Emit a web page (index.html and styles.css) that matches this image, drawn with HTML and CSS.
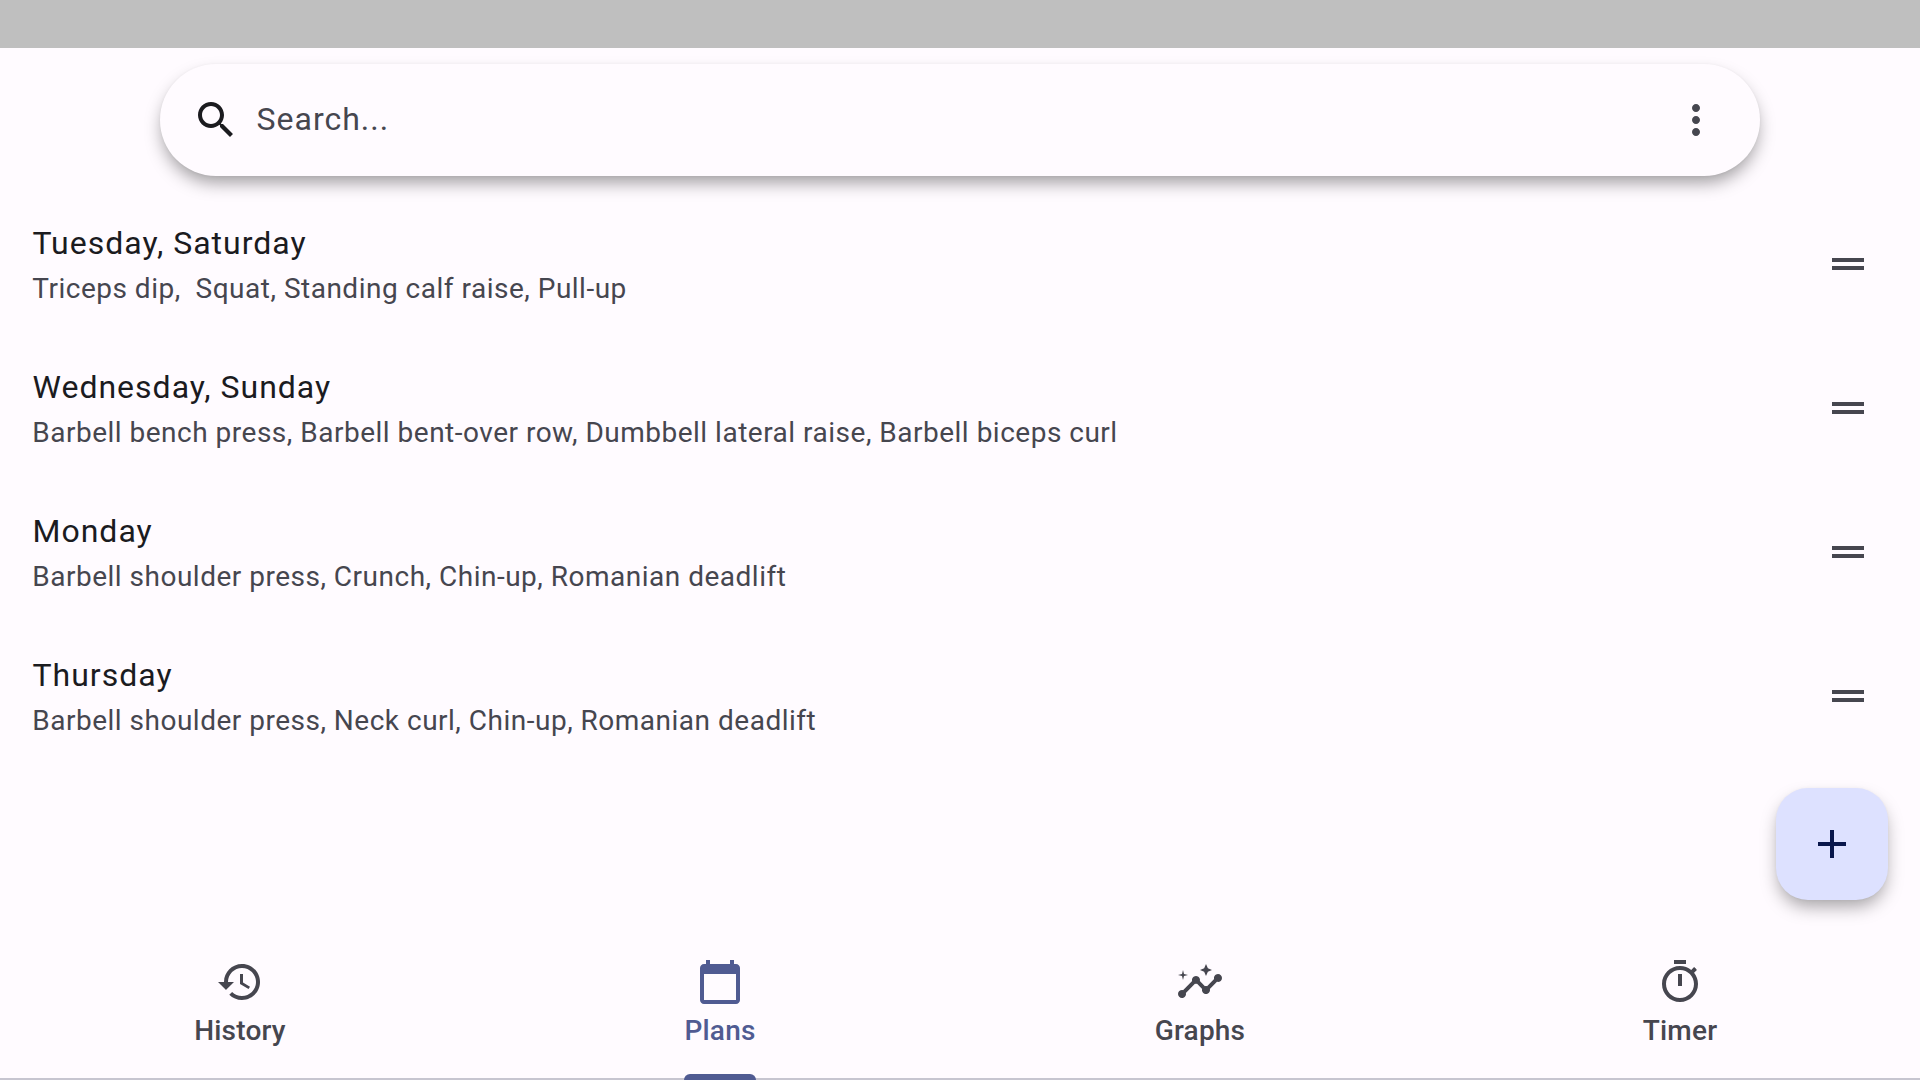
FILE: index.html
```html
<!DOCTYPE html>
<html lang="en">
<head>
<meta charset="utf-8">
<title>Plans</title>
<link rel="stylesheet" href="styles.css">
</head>
<body>
<div class="status-bar"></div>
<header class="search">
  <svg class="icon search-icon" viewBox="0 0 24 24"><path d="M15.5 14h-.79l-.28-.27C15.41 12.59 16 11.11 16 9.5 16 5.91 13.09 3 9.5 3S3 5.91 3 9.5 5.91 16 9.5 16c1.61 0 3.09-.59 4.23-1.57l.27.28v.79l5 4.99L20.49 19l-4.99-5zm-6 0C7.01 14 5 11.99 5 9.5S7.01 5 9.5 5 14 7.01 14 9.5 11.99 14 9.5 14z"/></svg>
  <span class="search-hint">Search...</span>
  <svg class="icon" viewBox="0 0 24 24"><path d="M12 8c1.1 0 2-.9 2-2s-.9-2-2-2-2 .9-2 2 .9 2 2 2zm0 2c-1.1 0-2 .9-2 2s.9 2 2 2 2-.9 2-2-.9-2-2-2zm0 6c-1.1 0-2 .9-2 2s.9 2 2 2 2-.9 2-2-.9-2-2-2z"/></svg>
</header>
<main class="plans">
  <div class="plan">
    <div class="plan-text"><div class="plan-title">Tuesday, Saturday</div><div class="plan-exercises">Triceps dip,  Squat, Standing calf raise, Pull-up</div></div>
    <svg class="icon" viewBox="0 0 24 24"><path d="M20 9H4v2h16V9zM4 15h16v-2H4v2z"/></svg>
  </div>
  <div class="plan">
    <div class="plan-text"><div class="plan-title">Wednesday, Sunday</div><div class="plan-exercises">Barbell bench press, Barbell bent-over row, Dumbbell lateral raise, Barbell biceps curl</div></div>
    <svg class="icon" viewBox="0 0 24 24"><path d="M20 9H4v2h16V9zM4 15h16v-2H4v2z"/></svg>
  </div>
  <div class="plan">
    <div class="plan-text"><div class="plan-title">Monday</div><div class="plan-exercises">Barbell shoulder press, Crunch, Chin-up, Romanian deadlift</div></div>
    <svg class="icon" viewBox="0 0 24 24"><path d="M20 9H4v2h16V9zM4 15h16v-2H4v2z"/></svg>
  </div>
  <div class="plan">
    <div class="plan-text"><div class="plan-title">Thursday</div><div class="plan-exercises">Barbell shoulder press, Neck curl, Chin-up, Romanian deadlift</div></div>
    <svg class="icon" viewBox="0 0 24 24"><path d="M20 9H4v2h16V9zM4 15h16v-2H4v2z"/></svg>
  </div>
</main>
<button class="fab" aria-label="Add plan">
  <svg class="icon" viewBox="0 0 24 24"><path d="M19 13h-6v6h-2v-6H5v-2h6V5h2v6h6v2z"/></svg>
</button>
<nav class="tabs">
  <div class="tab">
    <svg class="icon" viewBox="0 0 24 24"><path d="M13 3c-4.97 0-9 4.03-9 9H1l3.89 3.89.07.14L9 12H6c0-3.87 3.13-7 7-7s7 3.13 7 7-3.13 7-7 7c-1.93 0-3.68-.79-4.94-2.06l-1.42 1.42C8.27 19.99 10.51 21 13 21c4.97 0 9-4.03 9-9s-4.03-9-9-9zm-1 5v5l4.28 2.54.72-1.21-3.5-2.08V8H12z"/></svg>
    <span class="tab-label">History</span>
  </div>
  <div class="tab tab-active">
    <svg class="icon" viewBox="0 0 24 24"><path d="M20 3h-1V1h-2v2H7V1H5v2H4c-1.1 0-2 .9-2 2v16c0 1.1.9 2 2 2h16c1.1 0 2-.9 2-2V5c0-1.1-.9-2-2-2zm0 18H4V8h16v13z"/></svg>
    <span class="tab-label">Plans</span>
  </div>
  <div class="tab">
    <svg class="icon" viewBox="0 0 24 24"><path d="M21 8c-1.45 0-2.26 1.44-1.93 2.51l-3.55 3.56c-.3-.09-.74-.09-1.04 0l-2.55-2.55C12.27 10.45 11.46 9 10 9c-1.45 0-2.27 1.44-1.93 2.52l-4.56 4.55C2.44 15.74 1 16.55 1 18c0 1.1.9 2 2 2 1.45 0 2.26-1.44 1.93-2.51l4.55-4.56c.3.09.74.09 1.04 0l2.55 2.55C12.73 16.55 13.54 18 15 18c1.45 0 2.27-1.44 1.93-2.52l3.56-3.55c1.07.33 2.51-.48 2.51-1.93 0-1.1-.9-2-2-2z"/><path d="M15 9l.94-2.07L18 6l-2.06-.93L15 3l-.92 2.07L12 6l2.08.93zM3.5 11L4 9l2-.5L4 8l-.5-2L3 8l-2 .5L3 9z"/></svg>
    <span class="tab-label">Graphs</span>
  </div>
  <div class="tab">
    <svg class="icon" viewBox="0 0 24 24"><path d="M15 1H9v2h6V1zm-4 13h2V8h-2v6zm8.03-6.61l1.42-1.42c-.43-.51-.9-.99-1.41-1.41l-1.42 1.42C16.07 4.74 14.12 4 12 4c-4.97 0-9 4.03-9 9s4.02 9 9 9 9-4.03 9-9c0-2.12-.74-4.07-1.97-5.61zM12 20c-3.87 0-7-3.13-7-7s3.13-7 7-7 7 3.13 7 7-3.13 7-7 7z"/></svg>
    <span class="tab-label">Timer</span>
  </div>
</nav>
</body>
</html>
```
FILE: styles.css
```css
* { box-sizing: border-box; }

body {
  margin: 0;
  height: 1080px;
  display: flex;
  flex-direction: column;
  overflow: hidden;
  background: #fffbff;
  color: #46464f;
  font-family: Roboto, "Liberation Sans", sans-serif;
}

.icon {
  display: block;
  flex: none;
  width: 48px;
  height: 48px;
  fill: currentColor;
}

.status-bar {
  flex: none;
  height: 48px;
  background: #bfbfbf;
}

.search {
  flex: none;
  display: flex;
  align-items: center;
  gap: 16px;
  width: 1600px;
  height: 112px;
  margin: 16px auto;
  padding: 0 40px 0 32px;
  border-radius: 56px;
  background: #fffbff;
  box-shadow: 0 9px 18px -3px rgba(0, 0, 0, 0.4), 0 0 3px rgba(0, 0, 0, 0.04);
}

.search-icon { color: #1b1b1f; }

.search-hint {
  flex: 1;
  padding: 0 0 2px 0.5px;
  font-size: 32px;
  line-height: 48px;
  letter-spacing: 1px;
}

.plans { flex: 1; }

.plan {
  display: flex;
  align-items: center;
  justify-content: space-between;
  height: 144px;
  padding: 0 48px 0 32px;
}

.plan-text {
  display: grid;
  gap: 2px;
}

.plan-title {
  padding-left: 0.5px;
  color: #1b1b1f;
  font-size: 32px;
  line-height: 48px;
  letter-spacing: 1px;
}

.plan-exercises {
  padding-left: 0.25px;
  font-size: 28px;
  line-height: 40px;
  letter-spacing: 0.5px;
  white-space: pre;
}

.fab {
  position: absolute;
  right: 32px;
  bottom: 180px;
  display: grid;
  place-items: center;
  width: 112px;
  height: 112px;
  padding: 0;
  border: 0;
  border-radius: 32px;
  background: #dde1ff;
  color: #08164b;
  box-shadow: 0 9px 18px -3px rgba(0, 0, 0, 0.37), 0 0 3px rgba(0, 0, 0, 0.04);
}

.tabs {
  flex: none;
  display: grid;
  grid-template-columns: repeat(4, 1fr);
  height: 148px;
  border-bottom: 2px solid #c7c5d0;
}

.tab {
  display: flex;
  flex-direction: column;
  align-items: center;
  gap: 5px;
  padding-top: 26px;
}

.tab-label {
  font-size: 28px;
  font-weight: 500;
  line-height: 40px;
  letter-spacing: 0.2px;
}

.tab-active { color: #505b92; }

.tab-active::after {
  content: "";
  width: 71.4px;
  height: 6px;
  margin-top: 18px;
  border-radius: 6px 6px 0 0;
  background: currentColor;
}
```
